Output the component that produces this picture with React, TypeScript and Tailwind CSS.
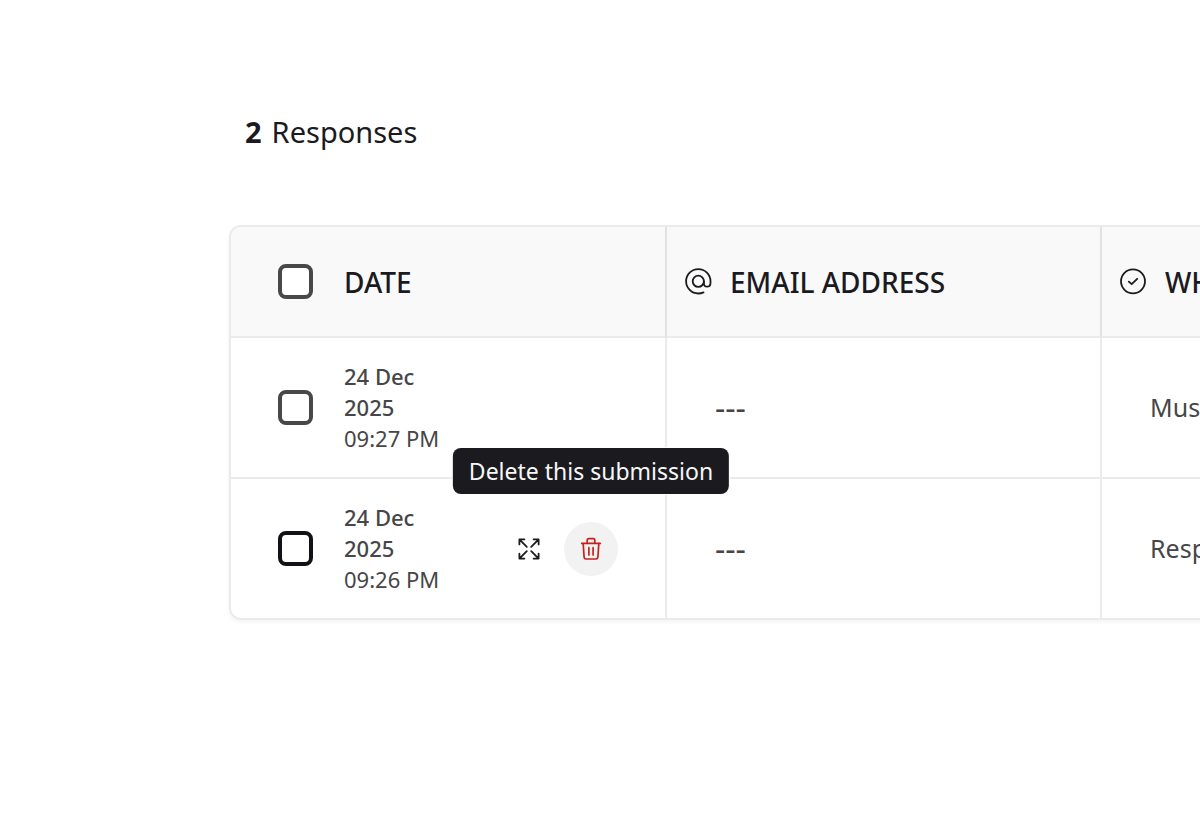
import type { ReactNode } from "react";

type Submission = { id: string; time: string; email: string; answer: string; active: boolean };

const submissions: Submission[] = [
  { id: "first", time: "09:27 PM", email: "---", answer: "Muse", active: false },
  { id: "second", time: "09:26 PM", email: "---", answer: "Resp", active: true },
];

function AtIcon() {
  return (
    <svg className="size-[27px] shrink-0" viewBox="0 0 27 27" fill="none" stroke="currentColor" strokeWidth="1.8" strokeLinecap="round" aria-hidden="true">
      <circle cx="13.3" cy="13.3" r="5.6" />
      <path d="M18.9 13.3v1.9c0 2 1.3 3.5 3.2 3.5s3.4-1.5 3.4-4v-1.4A12.2 12.2 0 1 0 13.3 25.5c1.9 0 3.6-.4 5.2-1.1" />
    </svg>
  );
}

function CheckCircleIcon() {
  return (
    <svg className="size-[27px] shrink-0" viewBox="0 0 27 27" fill="none" stroke="currentColor" strokeWidth="1.8" strokeLinecap="round" strokeLinejoin="round" aria-hidden="true">
      <circle cx="13" cy="13.3" r="12" />
      <path d="m8.8 13.6 2.9 2.6 5.5-5.4" />
    </svg>
  );
}

function ExpandIcon() {
  return (
    <svg className="size-[22px]" viewBox="0 0 22 22" fill="none" stroke="currentColor" strokeWidth="1.8" strokeLinecap="round" strokeLinejoin="round" aria-hidden="true">
      <path d="M1.4 6.4v-5h5M1.4 1.4l7.4 7.4M15.6 1.4h5v5M20.6 1.4l-7.4 7.4M1.4 15.6v5h5M1.4 20.6l7.4-7.4M20.6 15.6v5h-5M20.6 20.6l-7.4-7.4" />
    </svg>
  );
}

function TrashIcon() {
  return (
    <svg className="size-6" viewBox="0 0 24 24" fill="none" stroke="currentColor" strokeWidth="1.7" strokeLinecap="round" strokeLinejoin="round" aria-hidden="true">
      <path d="M2.7 6.4h18.6M8.2 6.2V3c0-.8.5-1.3 1.3-1.3h5c.8 0 1.3.5 1.3 1.3v3.2" />
      <path d="m4.2 6.6.9 13.6c.1 1.1.8 1.8 1.9 1.8h10c1.1 0 1.8-.7 1.9-1.8l.9-13.6M9.9 10.7v7.2M14.1 10.7v7.2" />
    </svg>
  );
}

function Checkbox({ label, dark }: { label: string; dark?: boolean }) {
  return (
    <input
      type="checkbox"
      aria-label={label}
      className={`size-[35px] shrink-0 appearance-none rounded-lg border-4 bg-white ${dark ? "border-[#121216]" : "border-[#48484a]"}`}
    />
  );
}

function HeaderCell({ icon, children, last }: { icon: ReactNode; children: ReactNode; last?: boolean }) {
  return (
    <th scope="col" className={`border-b-2 border-b-[#ebebeb] px-[18px] text-left font-medium ${last ? "" : "border-r-2 border-r-[#e2e2e2]"}`}>
      <div className="flex items-center gap-[18px] whitespace-nowrap">
        {icon}
        {children}
      </div>
    </th>
  );
}

function Row({ item, last }: { item: Submission; last: boolean }) {
  const line = last ? "" : "border-b-2";
  return (
    <tr>
      <td className={`border-r-2 border-[#ebebeb] py-[23px] pr-[47px] pl-[47px] ${line}`}>
        <div className="flex items-center">
          <Checkbox label={`Select ${item.time}`} dark={item.active} />
          <div className="ml-[31px] text-[22px] leading-[31px] whitespace-nowrap">
            <div className="font-medium">24 Dec</div>
            <div className="font-medium">2025</div>
            <div>{item.time}</div>
          </div>
          {item.active && (
            <div className="ml-auto flex gap-2 text-[#1b1b1f]">
              <button type="button" aria-label="Expand" className="flex size-[54px] items-center justify-center rounded-full">
                <ExpandIcon />
              </button>
              <div className="relative">
                <button type="button" aria-describedby="delete-tip" aria-label="Delete" className="flex size-[54px] items-center justify-center rounded-full bg-[#f2f2f2] text-[#c5221f]">
                  <TrashIcon />
                </button>
                <div id="delete-tip" role="tooltip" className="absolute bottom-full left-1/2 z-10 mb-7 -translate-x-1/2 rounded-lg bg-[#1b1b1f] px-4 py-2 text-[23px] leading-[30px] whitespace-nowrap text-[#f7f7f8] ring-1 ring-white">
                  Delete this submission
                </div>
              </div>
            </div>
          )}
        </div>
      </td>
      <td className={`border-r-2 border-[#ebebeb] px-12 text-[32px] leading-9 ${line}`}>{item.email}</td>
      <td className={`border-[#ebebeb] pl-12 text-[25px] ${line}`}>{item.answer}</td>
    </tr>
  );
}

export default function App() {
  return (
    <main className="min-h-screen overflow-hidden bg-white pt-[111px] pl-[229px] font-['Noto_Sans',sans-serif] text-[#1b1b1f]">
      <h1 className="flex gap-[10px] pl-4 text-[29px] leading-[42px]">
        <strong className="font-bold">2</strong>
        <span>Responses</span>
      </h1>
      <div className="mt-[72px] w-max rounded-xl border-2 border-[#ebebeb] shadow-[0_2px_4px_rgba(0,0,0,0.05)]">
        <table className="w-[1306px] table-fixed border-separate border-spacing-0">
          <thead className="text-[28px]">
            <tr className="h-[111px] bg-[#f9f9f9]">
              <th scope="col" className="w-[436px] rounded-tl-[10px] border-r-2 border-b-2 border-r-[#e2e2e2] border-b-[#ebebeb] pl-[47px] text-left font-medium">
                <div className="flex items-center gap-[31px]">
                  <Checkbox label="Select all" />
                  DATE
                </div>
              </th>
              <HeaderCell icon={<AtIcon />}>EMAIL ADDRESS</HeaderCell>
              <HeaderCell icon={<CheckCircleIcon />} last>WH</HeaderCell>
            </tr>
          </thead>
          <tbody className="text-[#464648]">
            {submissions.map((item, i) => (
              <Row key={item.id} item={item} last={i === submissions.length - 1} />
            ))}
          </tbody>
        </table>
      </div>
    </main>
  );
}
